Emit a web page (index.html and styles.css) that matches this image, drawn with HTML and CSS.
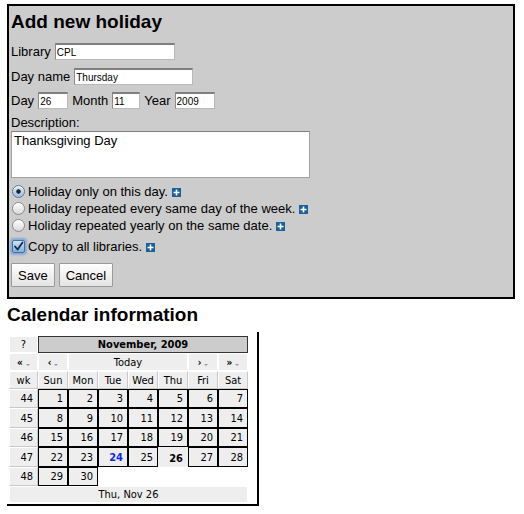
FILE: index.html
```html
<!DOCTYPE html>
<html lang="en">
<head>
<meta charset="utf-8">
<title>Add new holiday</title>
<link rel="stylesheet" href="styles.css">
</head>
<body>
<div class="page">
  <form class="panel">
    <h1 class="title">Add new holiday</h1>
    <div class="row row-1">
      <label class="lbl">Library</label>
      <input class="field f-lib" type="text" value="CPL">
    </div>
    <div class="row row-2">
      <label class="lbl">Day name</label>
      <input class="field f-dayname" type="text" value="Thursday">
    </div>
    <div class="row row-3">
      <label class="lbl">Day</label>
      <input class="field f-day" type="text" value="26">
      <label class="lbl">Month</label>
      <input class="field f-month" type="text" value="11">
      <label class="lbl">Year</label>
      <input class="field f-year" type="text" value="2009">
    </div>
    <label class="desc-label">Description:</label>
    <textarea class="desc">Thanksgiving Day</textarea>
    <div class="choices">
      <label class="opt"><input class="radio" type="radio" name="kind" checked><span class="opt-text">Holiday only on this day.</span><svg class="plus" viewBox="0 0 9 9" width="9" height="9"><rect width="9" height="9" fill="#1b5f9b"/><path d="M4.5 1.5v6M1.5 4.5h6" stroke="#fff" stroke-width="1.6"/></svg></label>
      <label class="opt"><input class="radio" type="radio" name="kind"><span class="opt-text">Holiday repeated every same day of the week.</span><svg class="plus" viewBox="0 0 9 9" width="9" height="9"><rect width="9" height="9" fill="#1b5f9b"/><path d="M4.5 1.5v6M1.5 4.5h6" stroke="#fff" stroke-width="1.6"/></svg></label>
      <label class="opt"><input class="radio" type="radio" name="kind"><span class="opt-text">Holiday repeated yearly on the same date.</span><svg class="plus" viewBox="0 0 9 9" width="9" height="9"><rect width="9" height="9" fill="#1b5f9b"/><path d="M4.5 1.5v6M1.5 4.5h6" stroke="#fff" stroke-width="1.6"/></svg></label>
    </div>
    <label class="opt copy">
      <span class="cb"><input class="check" type="checkbox" checked><svg class="tick" viewBox="0 0 13 13" width="13" height="13"><path d="M3 6.5l2.6 3L10.5 2.5" fill="none" stroke="#1a2a3a" stroke-width="1.8" stroke-linecap="round" stroke-linejoin="round"/></svg></span><span class="opt-text">Copy to all libraries.</span><svg class="plus" viewBox="0 0 9 9" width="9" height="9"><rect width="9" height="9" fill="#1b5f9b"/><path d="M4.5 1.5v6M1.5 4.5h6" stroke="#fff" stroke-width="1.6"/></svg>
    </label>
    <div class="buttons">
      <button class="btn" type="button">Save</button>
      <button class="btn" type="button">Cancel</button>
    </div>
  </form>

  <h2 class="title cal-title">Calendar information</h2>
  <div class="calwrap">
    <div class="cal">
      <div class="c c-help">?</div>
      <div class="c c-month">November, 2009</div>

      <div class="c c-nav"><span class="arr">«</span><i class="dd"></i></div>
      <div class="c c-nav"><span class="arr">‹</span><i class="dd"></i></div>
      <div class="c c-nav c-todaybtn">Today</div>
      <div class="c c-nav"><span class="arr">›</span><i class="dd"></i></div>
      <div class="c c-nav"><span class="arr">»</span><i class="dd"></i></div>

      <div class="c c-dn">wk</div>
      <div class="c c-dn">Sun</div>
      <div class="c c-dn">Mon</div>
      <div class="c c-dn">Tue</div>
      <div class="c c-dn">Wed</div>
      <div class="c c-dn">Thu</div>
      <div class="c c-dn">Fri</div>
      <div class="c c-dn">Sat</div>

      <div class="c c-wk">44</div>
      <div class="c c-d">1</div><div class="c c-d">2</div><div class="c c-d">3</div><div class="c c-d">4</div><div class="c c-d">5</div><div class="c c-d">6</div><div class="c c-d">7</div>

      <div class="c c-wk">45</div>
      <div class="c c-d">8</div><div class="c c-d">9</div><div class="c c-d">10</div><div class="c c-d">11</div><div class="c c-d">12</div><div class="c c-d">13</div><div class="c c-d">14</div>

      <div class="c c-wk">46</div>
      <div class="c c-d">15</div><div class="c c-d">16</div><div class="c c-d">17</div><div class="c c-d">18</div><div class="c c-d">19</div><div class="c c-d">20</div><div class="c c-d">21</div>

      <div class="c c-wk">47</div>
      <div class="c c-d">22</div><div class="c c-d">23</div><div class="c c-d c-now">24</div><div class="c c-d">25</div><div class="c c-d c-sel">26</div><div class="c c-d">27</div><div class="c c-d">28</div>

      <div class="c c-wk">48</div>
      <div class="c c-d">29</div><div class="c c-d">30</div><div class="c c-empty"></div><div class="c c-empty"></div><div class="c c-empty"></div><div class="c c-empty"></div><div class="c c-empty"></div>

      <div class="c c-foot">Thu, Nov 26</div>
    </div>
  </div>
</div>
</body>
</html>
```
FILE: styles.css
```css
html, body {
  margin: 0;
  padding: 0;
  background: #fff;
}

body {
  font-family: "Liberation Sans", Arial, sans-serif;
  font-size: 13px;
  color: #000;
}

.page {
  padding: 4px 0 0 7px;
}

.panel {
  box-sizing: content-box;
  width: 502px;
  margin: 0;
  padding: 5px 0 10px 2px;
  background: #cccccc;
  border: 2px solid #000;
}

.title {
  margin: 0;
  font-size: 19px;
  line-height: 22px;
  font-weight: bold;
}

.row {
  display: flex;
  align-items: center;
  gap: 4px;
  height: 17px;
}

.row-1 { margin-top: 10px; }
.row-2 { margin-top: 8px; }
.row-3 { margin-top: 7px; }

.lbl {
  line-height: 15px;
}

.field {
  box-sizing: border-box;
  height: 17px;
  margin: 0;
  padding: 0 1px;
  font-family: "Liberation Sans", Arial, sans-serif;
  font-size: 10px;
  color: #000;
  background: #fff;
  border-style: solid;
  border-width: 2px 1px 1px 1px;
  border-color: #7f7f7f #b9b9b9 #b9b9b9 #8a8a8a;
  outline: none;
}

.f-lib { width: 120px; }
.f-dayname { width: 119px; }
.f-day { width: 30px; }
.f-month { width: 28px; }
.f-year { width: 40px; }

.desc-label {
  display: block;
  margin-top: 6px;
  line-height: 15px;
}

.desc {
  display: block;
  box-sizing: border-box;
  width: 299px;
  height: 47px;
  margin: 1px 0 0 0;
  padding: 1px 2px;
  resize: none;
  font-family: "Liberation Sans", Arial, sans-serif;
  font-size: 13px;
  line-height: 15px;
  color: #000;
  background: #fff;
  border: 1px solid #a3a3a3;
  border-top-color: #808080;
  outline: none;
}

.choices {
  margin-top: 5px;
}

.opt {
  display: flex;
  align-items: center;
  height: 17px;
  line-height: 15px;
}

.opt-text {
  white-space: nowrap;
}

.radio {
  appearance: none;
  -webkit-appearance: none;
  box-sizing: border-box;
  width: 13px;
  height: 13px;
  margin: 0 3px 0 1px;
  border-radius: 50%;
  border: 1px solid #8a8a8a;
  background: linear-gradient(#ffffff, #d8d8d8);
  box-shadow: inset 0 1px 1px rgba(255,255,255,0.8);
}

.radio:checked {
  border-color: #5d7896;
  background:
    radial-gradient(circle at 50% 50%, #1d2430 0, #1d2430 1.8px, rgba(0,0,0,0) 2.6px),
    linear-gradient(#dde9f5, #9fbfdf);
}

.plus {
  display: block;
  flex: none;
  margin: 1px 0 0 4px;
}

.copy {
  margin-top: 4px;
}

.cb {
  position: relative;
  display: block;
  width: 13px;
  height: 13px;
  margin: 0 3px 0 1px;
  flex: none;
}

.check {
  appearance: none;
  -webkit-appearance: none;
  box-sizing: border-box;
  display: block;
  width: 13px;
  height: 13px;
  margin: 0;
  border-radius: 2px;
  border: 1px solid #4a6f9c;
  background: linear-gradient(#cfe3f8, #7fb0e3);
  box-shadow: 0 0 2px 2px rgba(80, 140, 220, 0.55);
}

.tick {
  position: absolute;
  left: 0;
  top: 0;
  pointer-events: none;
}

.buttons {
  display: flex;
  gap: 4px;
  margin-top: 8px;
}

.btn {
  box-sizing: border-box;
  height: 24px;
  margin: 0;
  padding: 0 6px;
  font-family: "Liberation Sans", Arial, sans-serif;
  font-size: 13px;
  color: #000;
  background: linear-gradient(#ffffff, #f1f1f1 50%, #e4e4e4);
  border: 1px solid #9a9a9a;
  border-radius: 1px;
}

.cal-title {
  margin-top: 5px;
}

.calwrap {
  width: fit-content;
  margin-top: 6px;
  padding: 4px 9px 1px 2px;
  border-right: 2px solid #000;
  border-bottom: 2px solid #000;
}

.cal {
  display: grid;
  grid-template-columns: 29px repeat(7, 30px);
  grid-template-rows: 17px 18px 18px 19px 20px 19px 20px 19px 17px;
  font-family: "DejaVu Sans Condensed", "DejaVu Sans", sans-serif;
  font-stretch: condensed;
  font-size: 11px;
  color: #000;
}

.c {
  box-sizing: border-box;
  display: flex;
  align-items: center;
  justify-content: center;
  white-space: nowrap;
}

.c-help {
  background: #eeeeee;
  border: 1px solid #ffffff;
}

.c-month {
  grid-column: span 7;
  background: #cccccc;
  border: 1px solid #333333;
  font-weight: bold;
}

.c-nav {
  background: #eeeeee;
  border: 1px solid #ffffff;
  gap: 3px;
}

.c-todaybtn {
  grid-column: span 4;
}

.arr {
  font-size: 10px;
  font-weight: bold;
}

.dd {
  display: block;
  width: 0;
  height: 0;
  border-left: 2px solid transparent;
  border-right: 2px solid transparent;
  border-top: 2px solid #9a9a9a;
  align-self: flex-end;
  margin-bottom: 4px;
}

.c-dn {
  background: #eeeeee;
  border-top: 1px solid #ffffff;
  border-left: 1px solid #ffffff;
  border-right: 1px solid #c8c8c8;
  border-bottom: 1px solid #c8c8c8;
}

.c-wk {
  justify-content: flex-end;
  padding-right: 4px;
  background: #eeeeee;
  border-top: 1px solid #ffffff;
  border-left: 1px solid #ffffff;
  border-right: 1px solid #c8c8c8;
  border-bottom: 1px solid #c8c8c8;
}

.c-d {
  justify-content: flex-end;
  padding-right: 4px;
  background: #eeeeee;
  border: 1px solid #000000;
}

.c-now {
  color: #1228e6;
  font-weight: bold;
}

.c-sel {
  border-color: #eeeeee;
  font-weight: bold;
  padding-top: 2px;
}

.c-empty {
  background: #ffffff;
}

.c-foot {
  grid-column: span 8;
  background: #eeeeee;
  border: 1px solid #ffffff;
}
```
